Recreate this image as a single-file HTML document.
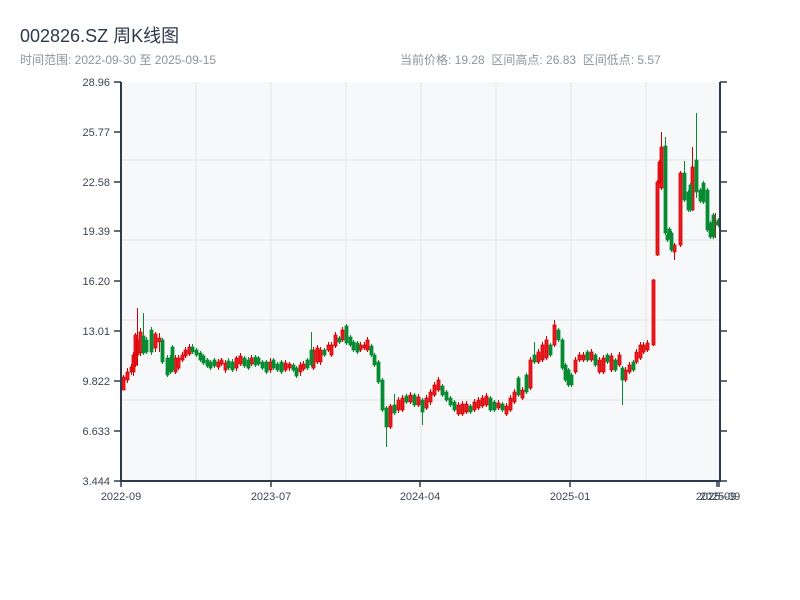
<!DOCTYPE html>
<html><head><meta charset="utf-8">
<style>
html,body{margin:0;padding:0;background:#fff;width:800px;height:600px;overflow:hidden;font-family:"Liberation Sans","Noto Sans CJK SC",sans-serif;}
.t{position:absolute;left:20px;top:22px;font-size:18px;color:#2d3a4a;}
.s{position:absolute;top:51px;font-size:12px;color:#8c949c;}
svg{position:absolute;left:0;top:0}
</style></head><body>
<svg width="800" height="600" xmlns="http://www.w3.org/2000/svg">
<rect x="121" y="82" width="599" height="399" fill="#f6f8fa"/>
<g stroke="#e1e5ea" stroke-width="1">
<line x1="196" y1="82" x2="196" y2="481"/><line x1="271" y1="82" x2="271" y2="481"/><line x1="346" y1="82" x2="346" y2="481"/><line x1="421" y1="82" x2="421" y2="481"/><line x1="496" y1="82" x2="496" y2="481"/><line x1="571" y1="82" x2="571" y2="481"/><line x1="646" y1="82" x2="646" y2="481"/>
<line x1="121" y1="160" x2="720" y2="160"/><line x1="121" y1="240" x2="720" y2="240"/><line x1="121" y1="320" x2="720" y2="320"/><line x1="121" y1="400" x2="720" y2="400"/>
</g>
<!-- red wicks -->
<path stroke="#d00000" stroke-width="1" fill="none" d="M123.5,375V390 M127.5,368V383 M131.5,364V375 M133.5,352V376 M135.5,333V367 M137.5,308V366 M140.5,328V356 M155.5,332V352 M159.5,333V352 M175.5,355V374 M178.5,355V370 M182.5,352V362 M185.5,347V358 M189.5,344V356 M218.5,359V370 M221.5,358V366 M225.5,360V373 M236.5,356V371 M240.5,353V366 M251.5,355V366 M270.5,358V373 M285.5,360V372 M289.5,362V371 M300.5,362V376 M303.5,361V371 M313.5,347V370 M317.5,345V364 M320.5,347V365 M328.5,342V352 M331.5,342V357 M335.5,332V348 M342.5,327V342 M360.5,342V352 M364.5,342V350 M367.5,337V352 M390.5,404V429 M398.5,397V413 M402.5,395V412 M410.5,392V404 M418.5,394V407 M426.5,395V410 M430.5,389V405 M434.5,382V397 M438.5,377V392 M458.5,402V416 M462.5,401V416 M466.5,401V414 M474.5,399V412 M478.5,397V410 M482.5,395V408 M486.5,393V407 M498.5,400V410 M506.5,403V416 M510.5,395V412 M514.5,389V404 M522.5,387V400 M530.5,357V390 M538.5,349V364 M542.5,342V362 M546.5,336V360 M554.5,320V347 M575.5,357V374 M579.5,352V362 M583.5,352V362 M591.5,349V362 M599.5,357V374 M603.5,355V374 M611.5,353V372 M619.5,352V367 M625.5,367V382 M629.5,362V374 M636.5,349V364 M640.5,342V360 M643.5,342V354 M647.5,340V352 M653.5,279V346 M657.5,180V256 M659.5,160V184 M661.5,132V190 M674.5,243V260 M680.5,171V247 M692.5,147V211 M715.5,213V238"/>
<path fill="#ee1c22" stroke="#d00000" stroke-width="0.8" d="M122,377h3V390h-3z M126,372h3V380h-3z M130,367h3V372h-3z M132,355h3V372h-3z M134,335h3V365h-3z M136,340h3V355h-3z M139,332h3V353h-3z M154,334h3V348h-3z M158,338h3V342h-3z M174,358h3V372h-3z M177,358h3V368h-3z M181,355h3V360h-3z M184,350h3V356h-3z M188,347h3V354h-3z M217,362h3V367h-3z M220,360h3V364h-3z M224,363h3V370h-3z M235,358h3V368h-3z M239,356h3V364h-3z M250,358h3V364h-3z M269,362h3V370h-3z M284,363h3V370h-3z M288,364h3V368h-3z M299,365h3V372h-3z M302,364h3V369h-3z M312,350h3V368h-3z M316,348h3V362h-3z M319,350h3V362h-3z M327,345h3V350h-3z M330,345h3V355h-3z M334,335h3V346h-3z M341,330h3V340h-3z M359,345h3V350h-3z M363,345h3V348h-3z M366,340h3V350h-3z M389,406h3V427h-3z M397,400h3V410h-3z M401,398h3V410h-3z M409,395h3V402h-3z M417,397h3V405h-3z M425,398h3V408h-3z M429,392h3V402h-3z M433,385h3V395h-3z M437,380h3V390h-3z M457,405h3V414h-3z M461,404h3V414h-3z M465,404h3V412h-3z M473,402h3V410h-3z M477,400h3V408h-3z M481,398h3V406h-3z M485,396h3V405h-3z M497,403h3V408h-3z M505,406h3V414h-3z M509,398h3V410h-3z M513,392h3V402h-3z M521,390h3V398h-3z M529,360h3V388h-3z M537,352h3V362h-3z M541,345h3V360h-3z M545,340h3V358h-3z M553,325h3V345h-3z M574,360h3V372h-3z M578,355h3V360h-3z M582,355h3V360h-3z M590,352h3V360h-3z M598,360h3V372h-3z M602,358h3V372h-3z M610,356h3V370h-3z M618,355h3V365h-3z M624,370h3V380h-3z M628,365h3V372h-3z M635,352h3V362h-3z M639,345h3V358h-3z M642,345h3V352h-3z M646,343h3V350h-3z M652,280h3V345h-3z M656,182h3V255h-3z M658,162h3V182h-3z M660,147h3V188h-3z M673,245h3V252h-3z M679,173h3V245h-3z M691,167h3V210h-3z M714,222h3V225h-3z"/>
<!-- green -->
<path stroke="#078a32" stroke-width="1" fill="none" d="M143.5,313V355 M146.5,337V354 M151.5,327V355 M162.5,338V364 M167.5,355V377 M170.5,355V374 M172.5,345V372 M192.5,344V354 M196.5,348V357 M200.5,351V362 M203.5,354V365 M207.5,358V368 M210.5,360V370 M214.5,358V368 M228.5,358V370 M232.5,359V372 M244.5,356V368 M248.5,357V370 M255.5,355V367 M258.5,356V366 M262.5,360V370 M266.5,360V374 M273.5,358V370 M277.5,362V372 M281.5,360V374 M293.5,363V372 M296.5,366V378 M307.5,358V370 M311.5,332V367 M324.5,348V357 M339.5,336V344 M346.5,324V345 M350.5,335V347 M353.5,340V352 M357.5,341V354 M371.5,344V357 M374.5,353V367 M378.5,360V384 M382.5,378V412 M386.5,406V447 M394.5,394V415 M406.5,394V404 M414.5,393V407 M422.5,398V425 M442.5,384V397 M446.5,390V402 M450.5,396V407 M454.5,400V412 M470.5,404V414 M490.5,396V412 M494.5,400V412 M502.5,402V412 M518.5,376V397 M526.5,373V394 M534.5,342V364 M550.5,343V357 M558.5,328V342 M562.5,338V370 M565.5,363V382 M568.5,368V387 M571.5,373V387 M587.5,350V362 M595.5,353V367 M607.5,353V364 M615.5,358V372 M622.5,366V405 M633.5,360V372 M665.5,137V235 M667.5,233V242 M669.5,227V238 M671.5,231V252 M684.5,161V202 M688.5,190V212 M690.5,183V212 M696.5,113V198 M700.5,188V203 M703.5,181V204 M707.5,188V232 M710.5,221V239 M713.5,213V239 M718.5,218V227"/>
<path fill="#078a32" stroke="#078a32" stroke-width="0.8" d="M142,336h3V353h-3z M145,340h3V352h-3z M150,330h3V352h-3z M161,340h3V362h-3z M166,358h3V375h-3z M169,358h3V372h-3z M171,347h3V370h-3z M191,347h3V352h-3z M195,350h3V355h-3z M199,353h3V360h-3z M202,356h3V363h-3z M206,360h3V366h-3z M209,362h3V368h-3z M213,360h3V366h-3z M227,361h3V368h-3z M231,362h3V370h-3z M243,358h3V366h-3z M247,360h3V368h-3z M254,357h3V365h-3z M257,358h3V364h-3z M261,362h3V368h-3z M265,362h3V372h-3z M272,360h3V368h-3z M276,364h3V370h-3z M280,362h3V372h-3z M292,365h3V370h-3z M295,368h3V376h-3z M306,360h3V368h-3z M310,350h3V365h-3z M323,350h3V355h-3z M338,338h3V342h-3z M345,326h3V343h-3z M349,337h3V345h-3z M352,342h3V350h-3z M356,343h3V352h-3z M370,346h3V355h-3z M373,355h3V365h-3z M377,362h3V382h-3z M381,380h3V410h-3z M385,408h3V427h-3z M393,405h3V413h-3z M405,396h3V402h-3z M413,395h3V405h-3z M421,400h3V412h-3z M441,386h3V395h-3z M445,392h3V400h-3z M449,398h3V405h-3z M453,402h3V410h-3z M469,406h3V412h-3z M489,398h3V410h-3z M493,402h3V410h-3z M501,404h3V410h-3z M517,378h3V395h-3z M525,375h3V392h-3z M533,355h3V362h-3z M549,345h3V355h-3z M557,330h3V340h-3z M561,340h3V368h-3z M564,365h3V380h-3z M567,370h3V385h-3z M570,375h3V385h-3z M586,352h3V360h-3z M594,355h3V365h-3z M606,355h3V362h-3z M614,360h3V370h-3z M621,368h3V380h-3z M632,362h3V370h-3z M664,146h3V233h-3z M666,235h3V240h-3z M668,229h3V236h-3z M670,233h3V250h-3z M683,173h3V200h-3z M687,192h3V210h-3z M689,185h3V210h-3z M695,160h3V192h-3z M699,190h3V201h-3z M702,183h3V202h-3z M706,190h3V230h-3z M709,223h3V237h-3z M712,215h3V237h-3z M717,220h3V225h-3z"/>
<g stroke="#2d3a4a" stroke-width="2" fill="none">
<line x1="121" y1="82" x2="121" y2="482"/><line x1="120" y1="481" x2="721" y2="481"/><line x1="720" y1="82" x2="720" y2="482"/>
</g>
<g stroke="#2d3a4a" stroke-width="1.5">
<line x1="114" y1="82" x2="121" y2="82"/><line x1="114" y1="132" x2="121" y2="132"/><line x1="114" y1="182" x2="121" y2="182"/><line x1="114" y1="231" x2="121" y2="231"/><line x1="114" y1="281" x2="121" y2="281"/><line x1="114" y1="331" x2="121" y2="331"/><line x1="114" y1="381" x2="121" y2="381"/><line x1="114" y1="431" x2="121" y2="431"/><line x1="114" y1="481" x2="121" y2="481"/>
<line x1="720" y1="82" x2="727" y2="82"/><line x1="720" y1="132" x2="727" y2="132"/><line x1="720" y1="182" x2="727" y2="182"/><line x1="720" y1="231" x2="727" y2="231"/><line x1="720" y1="281" x2="727" y2="281"/><line x1="720" y1="331" x2="727" y2="331"/><line x1="720" y1="381" x2="727" y2="381"/><line x1="720" y1="431" x2="727" y2="431"/><line x1="720" y1="481" x2="727" y2="481"/>
<line x1="121" y1="481" x2="121" y2="487"/><line x1="271" y1="481" x2="271" y2="487"/><line x1="420" y1="481" x2="420" y2="487"/><line x1="570" y1="481" x2="570" y2="487"/><line x1="717" y1="481" x2="717" y2="487"/><line x1="719" y1="481" x2="719" y2="487"/>
</g>
<g font-size="11" fill="#3a4654" text-anchor="end" font-family="Liberation Sans,sans-serif">
<text x="110" y="86">28.96</text><text x="110" y="136">25.77</text><text x="110" y="186">22.58</text><text x="110" y="235">19.39</text><text x="110" y="285">16.20</text><text x="110" y="335">13.01</text><text x="110" y="385">9.822</text><text x="110" y="435">6.633</text><text x="110" y="485">3.444</text>
</g>
<g font-size="11" fill="#3a4654" text-anchor="middle" font-family="Liberation Sans,sans-serif">
<text x="121" y="500">2022-09</text><text x="271" y="500">2023-07</text><text x="420" y="500">2024-04</text><text x="570" y="500">2025-01</text><text x="716" y="500">2025-09</text><text x="720" y="500">2025-09</text>
</g>
</svg>
<div class="t">002826.SZ 周K线图</div>
<div class="s" style="left:20px">时间范围: 2022-09-30 至 2025-09-15</div>
<div class="s" style="left:400px">当前价格: 19.28&nbsp;&nbsp;区间高点: 26.83&nbsp;&nbsp;区间低点: 5.57</div>
</body></html>
